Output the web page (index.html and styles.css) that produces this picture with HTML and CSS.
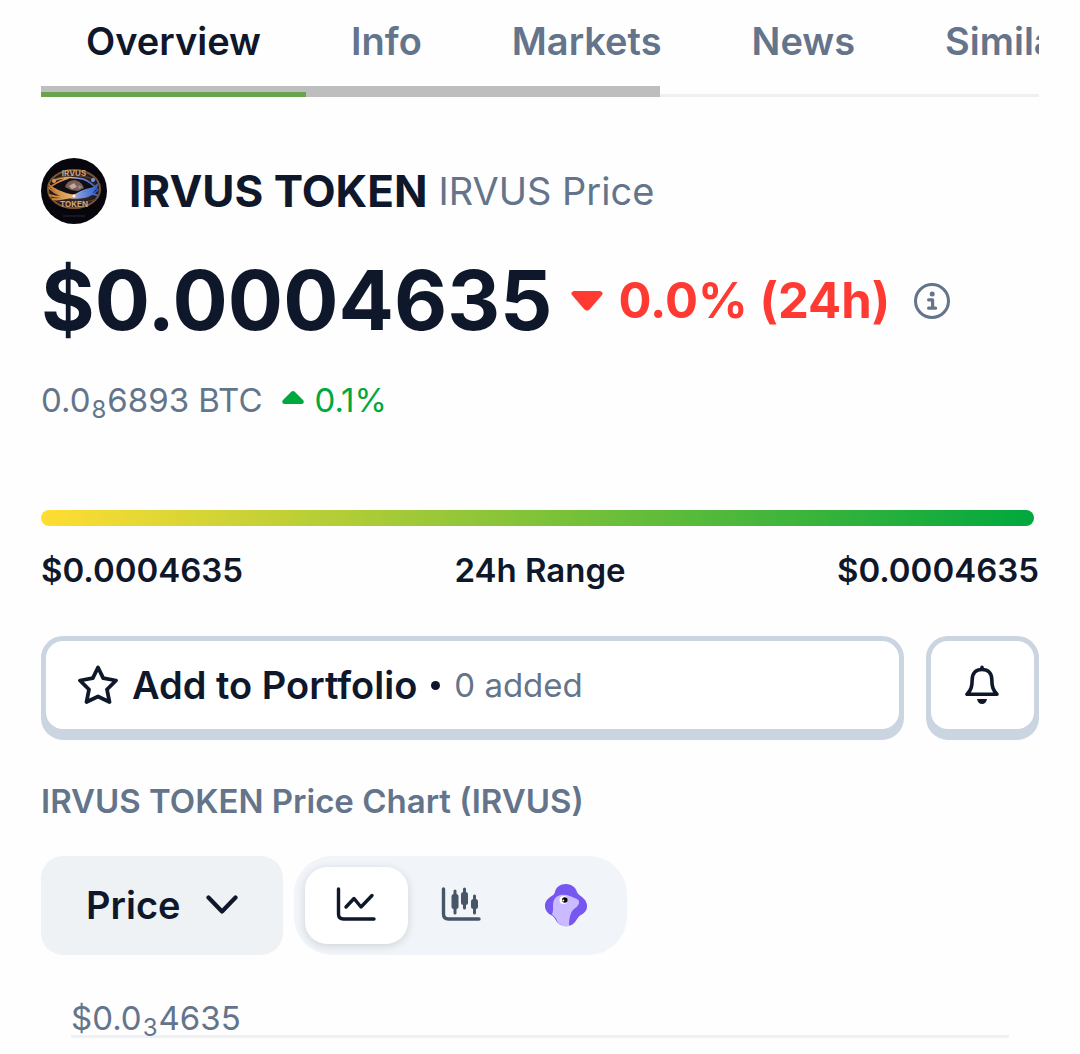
FILE: index.html
```
<!DOCTYPE html>
<html lang="en">
<head>
    <meta charset="UTF-8">
    <meta name="viewport" content="width=device-width, initial-scale=1.0">
    <title>IRVUS TOKEN Price</title>
    <link rel="stylesheet" href="styles.css">
</head>
<body>
    <nav class="tabs">
        <div class="tab-list">
            <a href="#" class="tab active">Overview</a>
            <a href="#" class="tab">Info</a>
            <a href="#" class="tab">Markets</a>
            <a href="#" class="tab">News</a>
            <a href="#" class="tab">Similar</a>
        </div>
        <div class="scrollbar"></div>
    </nav>

    <main>
        <h1 class="coin-title">
            <svg class="coin-logo" viewBox="0 0 66 66" aria-hidden="true">
                <defs>
                    <linearGradient id="ring" x1="0" x2="1">
                        <stop offset="0" stop-color="#c27a2c"/>
                        <stop offset="0.45" stop-color="#e8b070"/>
                        <stop offset="0.6" stop-color="#7f9be0"/>
                        <stop offset="1" stop-color="#2d5bc0"/>
                    </linearGradient>
                    <radialGradient id="glow">
                        <stop offset="0" stop-color="#5a4038"/>
                        <stop offset="1" stop-color="#1c1418"/>
                    </radialGradient>
                </defs>
                <circle cx="33" cy="33" r="33" fill="#06060c"/>
                <ellipse cx="33" cy="31" rx="27" ry="20" fill="url(#glow)"/>
                <ellipse cx="33" cy="31" rx="26" ry="19" fill="none" stroke="#80552e" stroke-width="2"/>
                <path d="M10 22Q33 13 56 22M10 41Q33 49 56 41" fill="none" stroke="#5e4430" stroke-width="1"/>
                <path d="M12 23Q24 17 42 21Q50 24 57 32Q48 41 32 40Q17 39 8 30Q17 23 28 20" fill="#100d14" stroke="url(#ring)" stroke-width="1.500"/>
                <path d="M7 25Q15 33 33 37Q48 34 58 24Q56 34 46 39Q39 41 33 40Q12 38 7 25Z" fill="url(#ring)"/>
                <path d="M8 37Q20 41 34 37Q49 33 58 38M11 41Q26 42 36 36Q45 31 55 30" fill="none" stroke="url(#ring)" stroke-width="2"/>
                <path d="M24 29Q26 22 34 22Q41 24 43 30L37 33L30 32Z" fill="#7c6058"/>
                <path d="M28 28L33 25L36 29L31 31Z" fill="#c8a99b"/>
                <path d="M37 27L41 29L38 31Z" fill="#8390b4"/>
                <circle cx="13" cy="23" r="2" fill="#d69b51"/>
                <circle cx="52" cy="22" r="2" fill="#6f99ee"/>
                <circle cx="33" cy="38" r="1.500" fill="#fff"/>
                <text x="33" y="18" class="logo-text">IRVUS</text>
                <text x="33" y="49" class="logo-text">TOKEN</text>
                <path d="M22 58H44" stroke="#292832" stroke-width="1"/>
            </svg>
            <span class="coin-name">IRVUS TOKEN</span>
            <span class="coin-symbol">IRVUS Price</span>
        </h1>

        <div class="price-row">
            <span class="price">$0.0004635</span>
            <span class="change">
                <svg class="caret" viewBox="0 0 32 20" aria-hidden="true"><path d="M3 0H29Q33 1 31 4L19 18Q16 21 13 18L1 4Q-1 1 3 0Z" fill="currentColor"/></svg>
                0.0% (24h)
            </span>
            <svg class="info" viewBox="0 0 36 36" fill="none" stroke="currentColor" stroke-linecap="round" stroke-linejoin="round" aria-label="Info" role="img">
                <circle cx="18" cy="18" r="16.5" stroke-width="3"/>
                <path d="M14.600 16.800H18.600V25M14.600 25.200H21.600" stroke-width="3.200"/>
                <circle cx="18.200" cy="11" r="2.500" fill="currentColor" stroke="none"/>
            </svg>
        </div>

        <div class="btc-row">
            <span>0.0<sub>8</sub>6893 BTC</span>
            <span class="btc-change">
                <svg class="small-caret" viewBox="0 0 22 18" aria-hidden="true"><path d="M9 1Q11-1 13 1L21 9Q23 12 20 13H2Q-1 12 1 9Z" fill="currentColor"/></svg>
                0.1%
            </span>
        </div>

        <div class="range">
            <div class="range-bar"></div>
            <div class="range-labels">
                <span>$0.0004635</span>
                <span>24h Range</span>
                <span>$0.0004635</span>
            </div>
        </div>

        <div class="actions">
            <button class="outline-button portfolio">
                <svg class="star" viewBox="0 0 40 40" aria-hidden="true"><path d="M20 2.500L25.200 13.200L38 15.500L29 24.500L31.500 37L20 31.500L8.500 37L11 24.500L2 15.500L14.800 13.200Z" fill="none" stroke="currentColor" stroke-width="3.800" stroke-linejoin="round"/></svg>
                <span>Add to Portfolio</span>
                <span class="dot"></span>
                <span class="added">0 added</span>
            </button>
            <button class="outline-button alert" aria-label="Price alert">
                <svg class="bell" viewBox="0 0 36 40" aria-hidden="true">
                    <path d="M17 4.500C10.500 4.500 7.300 8.500 7.200 14.500C7.100 21.500 6.200 25 2 29.300H32C27.800 25 26.900 21.500 26.800 14.500C26.700 8.500 23.500 4.500 17 4.500ZM17 4V2.200" fill="none" stroke="currentColor" stroke-width="3.600" stroke-linejoin="round" stroke-linecap="round"/>
                    <path d="M12 34H22Q21 39 17 39Q13 39 12 34Z" fill="currentColor"/>
                </svg>
            </button>
        </div>

        <h2 class="chart-title">IRVUS TOKEN Price Chart (IRVUS)</h2>

        <div class="chart-controls">
            <button class="metric-button">
                Price
                <svg class="chevron" viewBox="0 0 32 20" aria-hidden="true"><path d="M2.500 2.500L16 16.500L29.500 2.500" fill="none" stroke="currentColor" stroke-width="4.200" stroke-linecap="round" stroke-linejoin="round"/></svg>
            </button>
            <div class="chart-types">
                <button class="type-button selected" aria-label="Line chart">
                    <svg class="type-icon" viewBox="0 0 40 40" fill="none" stroke="currentColor" stroke-width="3.400" stroke-linecap="round" stroke-linejoin="round">
                        <path d="M2.500 3V28Q2.500 33 7.500 33H38"/>
                        <path d="M10 21L18 12.500L25 21L36 9.500"/>
                    </svg>
                </button>
                <button class="type-button" aria-label="Candlestick chart">
                    <svg class="type-icon" viewBox="0 0 40 40" fill="none" stroke="currentColor" stroke-width="3.400" stroke-linecap="round" stroke-linejoin="round">
                        <path d="M2.500 3V28Q2.500 33 7.500 33H38"/>
                        <path d="M14 5V27M23.500 3V22M33.500 10V27" stroke-width="3"/>
                        <g fill="currentColor" stroke="none">
                            <rect x="10.500" y="8" width="7" height="15" rx="2.500"/>
                            <rect x="20" y="6" width="7" height="13" rx="2.500"/>
                            <rect x="30" y="13" width="7" height="10" rx="2.500"/>
                        </g>
                    </svg>
                </button>
                <button class="type-button" aria-label="GeckoTerminal">
                    <svg class="gecko" viewBox="0 0 44 46">
                        <path d="M22 1C28 1 32 5 33 9C34 12 38 13 41 17C45 23 43 29 37 32C33 34 33 38 29 41C25 44 18 44 14 40C11 37 11 34 7 32C1 29 -1 22 3 17C6 13 10 13 11 9C12 4 16 1 22 1Z" fill="#7657f0"/>
                        <path d="M10 17C13 11 20 11 26 13L33 16C37 18 35 23 30 26C26 30 25 36 25 43C20 44 15 42 13 38C12 34 9 33 8 31C10 27 8 22 10 17Z" fill="#cabaff"/>
                        <circle cx="19.500" cy="17" r="4" fill="#fff"/>
                        <circle cx="20.800" cy="17" r="2.800" fill="#050505"/>
                        <circle cx="19.300" cy="17.500" r="1" fill="#fff"/>
                    </svg>
                </button>
            </div>
        </div>

        <div class="chart">
            <div class="axis-label">$0.0<sub>3</sub>4635</div>
        </div>
    </main>
</body>
</html>
```
FILE: styles.css
```
* {
    box-sizing: border-box;
}

body {
    font-family: 'Inter', sans-serif;
    font-size: 33px;
    line-height: 44px;
    background-color: #fefefe;
    color: #0f172a;
    margin: 0;
    padding: 0 41px;
}

button {
    font: inherit;
    color: inherit;
    border: none;
    padding: 0;
    cursor: pointer;
}

svg {
    display: block;
    flex-shrink: 0;
}

sub {
    font-size: 24px;
    line-height: 0;
    margin: 0 1px;
    vertical-align: baseline;
    position: relative;
    top: 6px;
}

.tabs {
    position: relative;
    overflow: hidden;
}

.tab-list {
    display: flex;
    border-bottom: 3px solid #eff0f1;
    height: 97px;
}

.tab {
    flex-shrink: 0;
    height: 97px;
    padding: 19px 45px;
    font-size: 38px;
    font-weight: 600;
    color: #64748b;
    text-decoration: none;
}

.tab.active {
    color: #0f172a;
    border-bottom: 5px solid #6aa34d;
    z-index: 1;
}

.scrollbar {
    position: absolute;
    left: 0;
    bottom: 0;
    width: 62%;
    height: 11px;
    background: #bebebe;
}

.coin-title {
    display: flex;
    align-items: center;
    margin: 61px 0 0;
    font-size: 44px;
}

.coin-logo {
    width: 66px;
    height: 66px;
    margin-right: 22px;
}

.logo-text {
    font-family: 'Inter', sans-serif;
    font-size: 8px;
    font-weight: 700;
    text-anchor: middle;
    fill: #c9a47e;
}

.coin-symbol {
    margin-left: 11px;
    font-size: 38px;
    font-weight: 400;
    color: #64748b;
}

.price-row {
    display: flex;
    align-items: center;
    margin-top: 22px;
}

.price {
    font-size: 82px;
    font-weight: 700;
    line-height: 110px;
}

.change {
    display: flex;
    align-items: center;
    gap: 16px;
    margin-left: 18px;
    font-size: 49px;
    font-weight: 700;
    color: #ff3a33;
}

.caret {
    width: 32px;
    height: 20px;
}

.info {
    width: 36px;
    height: 36px;
    margin-left: 24px;
    color: #64748b;
}

.btc-row {
    display: flex;
    margin-top: 22px;
    color: #64748b;
}

.btc-change {
    display: flex;
    align-items: center;
    gap: 10px;
    margin-left: 20px;
    color: #00a83e;
}

.small-caret {
    width: 22px;
    height: 18px;
}

.range {
    margin-top: 88px;
    font-weight: 600;
}

.range-bar {
    height: 16px;
    margin-right: 5px;
    border-radius: 8px;
    background: linear-gradient(to right, #ffdd33, #00a83e);
}

.range-labels {
    display: flex;
    justify-content: space-between;
    margin-top: 22px;
}

.actions {
    display: flex;
    gap: 22px;
    margin-top: 44px;
}

.outline-button {
    display: flex;
    align-items: center;
    height: 98px;
    border: 5px solid #cbd5e1;
    border-radius: 22px;
    background: #fff;
    box-shadow: 0 6px 0 #cbd5e1;
}

.portfolio {
    flex: 1;
    padding-left: 32px;
    font-size: 38px;
    font-weight: 600;
}

.star {
    width: 40px;
    height: 40px;
    margin-right: 14px;
}

.dot {
    width: 9px;
    height: 9px;
    margin: 0 14px;
    border-radius: 50%;
    background: #0f172a;
}

.added {
    font-size: 33px;
    font-weight: 400;
    color: #64748b;
}

.alert {
    justify-content: center;
    width: 113px;
}

.bell {
    width: 36px;
    height: 40px;
}

.chart-title {
    margin: 45px 0 0;
    font-size: 33px;
    font-weight: 600;
    color: #64748b;
}

.chart-controls {
    display: flex;
    gap: 11px;
    margin-top: 33px;
}

.metric-button {
    display: flex;
    align-items: center;
    gap: 25px;
    height: 99px;
    padding: 0 45px 2px;
    border-radius: 22px;
    background: #eff2f5;
    font-size: 38px;
    font-weight: 600;
}

.chevron {
    width: 32px;
    height: 20px;
}

.chart-types {
    display: flex;
    gap: 2px;
    padding: 11px 9px 11px 11px;
    border-radius: 38px;
    background: #f1f5f9;
}

.type-button {
    display: flex;
    align-items: center;
    justify-content: center;
    width: 103px;
    height: 77px;
    border-radius: 22px;
    background: none;
    color: #475569;
}

.type-button.selected {
    background: #fff;
    color: #0f172a;
    box-shadow: 0 2px 8px rgba(15, 23, 42, 0.15);
}

.type-icon {
    width: 40px;
    height: 40px;
}

.gecko {
    width: 44px;
    height: 46px;
}

.chart {
    margin: 41px 30px 0;
    border-bottom: 3px solid #eff2f5;
    color: #64748b;
}

.axis-label {
    height: 39px;
}
```
